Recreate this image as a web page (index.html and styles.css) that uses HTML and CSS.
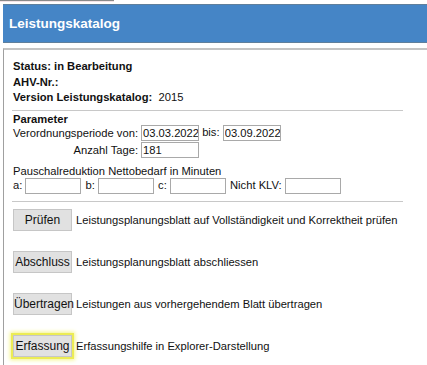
FILE: index.html
```html
<!DOCTYPE html>
<html lang="de">
<head>
    <meta charset="UTF-8">
    <title>Leistungskatalog</title>
    <link rel="stylesheet" href="styles.css">
</head>
<body>
    <div class="topline"></div>
    <header class="titlebar">
        <h1>Leistungskatalog</h1>
    </header>

    <div class="panel">
        <section class="info">
            <div><b>Status: in Bearbeitung</b></div>
            <div><b>AHV-Nr.:</b></div>
            <div><b>Version Leistungskatalog:</b>&nbsp; 2015</div>
        </section>

        <section class="params">
            <div class="section-title">Parameter</div>
            <div class="period">
                <label class="lbl">Verordnungsperiode von:</label>
                <span class="pair"><input type="text" value="03.03.2022"> bis: <input type="text" value="03.09.2022"></span>
                <label class="lbl">Anzahl Tage:</label>
                <span class="pair"><input type="text" value="181"></span>
            </div>
            <div class="sub-title">Pauschalreduktion Nettobedarf in Minuten</div>
            <div class="reduction">
                a: <input type="text"> b: <input type="text"> c: <input type="text"> Nicht KLV: <input type="text">
            </div>
        </section>

        <section class="actions">
            <div class="action"><button>Prüfen</button> Leistungsplanungsblatt auf Vollständigkeit und Korrektheit prüfen</div>
            <div class="action"><button>Abschluss</button> Leistungsplanungsblatt abschliessen</div>
            <div class="action"><button>Übertragen</button> Leistungen aus vorhergehendem Blatt übertragen</div>
            <div class="action"><button class="marked">Erfassung</button> Erfassungshilfe in Explorer-Darstellung</div>
        </section>
    </div>
</body>
</html>
```
FILE: styles.css
```css
body {
    margin: 0;
    font-family: "Liberation Sans", Arial, sans-serif;
    font-size: 11.2px;
    color: #111;
    background: #fff;
    overflow: hidden;
}

.topline {
    width: 114px;
    height: 1px;
    background: #8a8a8a;
    border-bottom: 1px solid #f3e3e6;
}

.titlebar {
    margin: 2px 0 0 3px;
    height: 37px;
    background: #4585c6;
    border-top: 1px solid #5f7f9c;
    border-bottom: 1px solid #5f7f9c;
    display: flex;
    align-items: center;
}

.titlebar h1 {
    margin: 0 0 0 6px;
    font-size: 13.5px;
    font-weight: bold;
    color: #fff;
}

.panel {
    margin: 5px 0 0 3px;
    border-top: 2px solid #c4c4c4;
    border-left: 1px solid #a0a0a0;
    padding: 9px 0 0 8px;
    height: 320px;
}

.info {
    width: 390px;
    padding: 0 0 4px 1px;
    line-height: 15.5px;
    border-bottom: 1px solid #c8c8c8;
}

.params {
    width: 391px;
    padding-top: 3px;
    padding-bottom: 7px;
    border-bottom: 1px solid #c8c8c8;
}

.section-title {
    font-weight: bold;
    padding-left: 1px;
    line-height: 11px;
}

.period {
    display: grid;
    grid-template-columns: auto 1fr;
    row-gap: 1px;
    align-items: center;
    padding-left: 1px;
}

.lbl {
    justify-self: end;
    margin-right: 3px;
}

.sub-title {
    margin-top: 6px;
    padding-left: 1px;
    line-height: 14px;
}

.reduction {
    padding-left: 1px;
}

input {
    width: 55px;
    height: 14px;
    padding: 0 0 0 1px;
    margin: 0;
    border: 1px solid #a9a9a9;
    font-family: "Liberation Sans", Arial, sans-serif;
    font-size: 11.2px;
    color: #111;
    vertical-align: middle;
}

.reduction input {
    width: 53px;
    margin-right: 1px;
}

.actions {
    padding-top: 7px;
}

.action {
    display: flex;
    align-items: center;
    gap: 4px;
    margin-bottom: 20px;
    padding-left: 1px;
}

button {
    width: 59px;
    height: 22px;
    padding: 0;
    background: #e1e1e1;
    border: 1px solid #c6c6c6;
    font-family: "Liberation Sans", Arial, sans-serif;
    font-size: 12px;
    color: #111;
}

.marked {
    box-shadow: 0 0 0 2px #ecec55, 0 0 4px 3px #f4f488;
}
```
